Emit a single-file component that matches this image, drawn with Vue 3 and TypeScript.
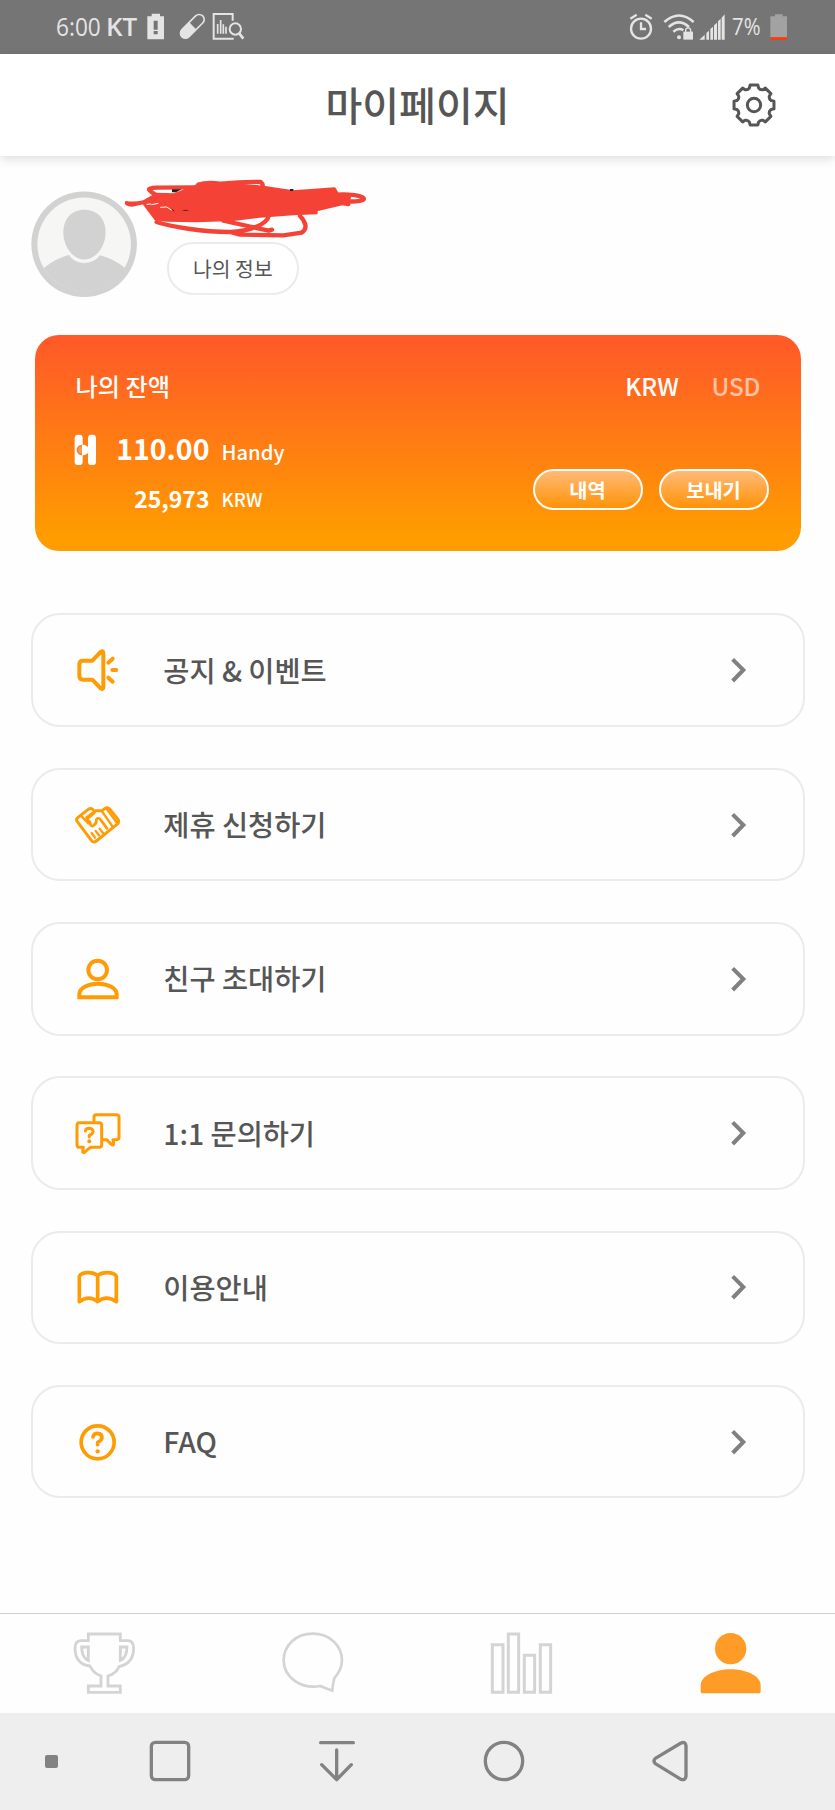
<script setup lang="ts">
interface MenuItem {
  id: string
  label: string
  box: string
}

const menu: MenuItem[] = [
  { id: 'notice', label: '공지 & 이벤트', box: '163 138 144 144' },
  { id: 'partner', label: '제휴 신청하기', box: '163 601 144 144' },
  { id: 'invite', label: '친구 초대하기', box: '163 134 144 144' },
  { id: 'inquiry', label: '1:1 문의하기', box: '163 595 144 144' },
  { id: 'guide', label: '이용안내', box: '163 129 144 144' },
  { id: 'faq', label: 'FAQ', box: '163 592 144 144' },
]

// Outline of the eight-tooth settings gear, centred on 0,0
function gearPath(): string {
  const at = (deg: number, r: number) => {
    const a = (deg * Math.PI) / 180
    return `${(r * Math.sin(a)).toFixed(2)} ${(-r * Math.cos(a)).toFixed(2)}`
  }
  let d = ''
  for (let k = 0; k < 8; k++) {
    const c = k * 45
    d += `${k ? 'L' : 'M'}${at(c - 11, 61)}L${at(c + 11, 61)}L${at(c + 15, 53)}Q${at(c + 22.5, 48)} ${at(c + 30, 53)}`
  }
  return d + 'Z'
}
const gear = gearPath()
</script>

<template>
  <div class="page">
    <div class="status">
      <span class="time">6:00</span>
      <span class="carrier">KT</span>
      <svg class="s-batt" viewBox="441 38 54 82" width="18" height="27.3">
        <path d="M442 48H455V40H480V48H492V117H442Z" fill="#e4e4e4" />
        <path d="M461 61H473V88H461ZM461 92H473V102H461Z" fill="#757575" />
      </svg>
      <svg class="s-pill" viewBox="534 36 84 84" width="28" height="28">
        <g transform="translate(577 79) rotate(-45)">
          <rect x="-44" y="-15" width="88" height="30" rx="15" fill="none" stroke="#e4e4e4" stroke-width="5" />
          <path d="M2 -16H-30A16 16 0 0 0 -30 16H2Z" fill="#e4e4e4" />
        </g>
      </svg>
      <svg class="s-chart" viewBox="637 36 99 84" width="33" height="28" fill="none" stroke="#e4e4e4" stroke-width="6">
        <path d="M699 62V42H642V116H702" />
        <path d="M654 72V101M663 60V101M671 73V101M679 80V101" stroke-width="5" />
        <circle cx="707" cy="87" r="17" />
        <path d="M719 101L731 116" stroke-width="8" />
      </svg>
      <div class="grow"></div>
      <svg class="s-alarm" viewBox="634 38 74 82" width="24.7" height="27.3" fill="none" stroke="#e4e4e4" stroke-width="7">
        <circle cx="670" cy="85" r="30" />
        <path d="M670 66V86H685M638 55L657 43M702 55L683 43" />
      </svg>
      <svg class="s-wifi" viewBox="736 38 96 82" width="32" height="27.3" fill="none" stroke="#e4e4e4" stroke-width="7.5">
        <path d="M740 65Q784 26 828 65M753 80Q784 52 814 80M767 94Q784 81 797 90" />
        <circle cx="784" cy="111" r="6" fill="#e4e4e4" stroke="none" />
        <path d="M797 94H826V118H797Z" fill="#e4e4e4" stroke="none" />
        <path d="M804 96V90A7.500 7.500 0 0 1 819 90V96" stroke-width="4" />
      </svg>
      <svg class="s-signal" viewBox="844 38 80 82" width="26.7" height="27.3" fill="#e4e4e4">
        <path d="M845 118L861 103V118ZM866 98L874 91V118H866ZM878 86L886 79V118H878ZM889 75L898 67V118H889ZM901 63L909 55V118H901ZM912 52L921 42V118H912Z" />
      </svg>
      <span class="percent">7%</span>
      <svg class="s-low" viewBox="1058 38 54 82" width="18" height="27.3">
        <path d="M1059 48H1073V42H1096V48H1109V111H1059Z" fill="#a2a2a2" />
        <path d="M1059 111H1109V119H1059Z" fill="#ff3a0c" />
      </svg>
    </div>

    <header class="header">
      <h1>마이페이지</h1>
      <svg class="gear" viewBox="-66 -66 132 132" width="44" height="44" fill="none" stroke="#565656" stroke-width="9" stroke-linejoin="round">
        <path :d="gear" />
        <circle cx="0" cy="0" r="20" />
      </svg>
    </header>

    <section class="profile">
      <svg class="avatar" viewBox="91 91 320 320" width="106.600" height="106.600">
        <circle cx="250.500" cy="251" r="158.500" fill="#d2d2d2" />
        <circle cx="250.500" cy="251" r="140.500" fill="#f6f6f5" />
        <path d="M251 147C292 147 315 176 315 215C315 258 285 297 251 297C217 297 188 258 188 215C188 176 211 147 251 147Z" fill="#d2d2d2" />
        <path d="M130 323Q165 294 205 284C225 316 276 316 298 285Q340 296 373 323A142 142 0 0 1 130 323Z" fill="#d2d2d2" stroke="#d2d2d2" stroke-width="2" />
      </svg>
      <button class="info">나의 정보</button>
      <svg class="scribble" viewBox="366 54 738 186" width="246" height="62" fill="none" stroke="#f44336" stroke-width="13" stroke-linecap="round" stroke-linejoin="round">
        <path d="M378 126Q405 130 430 124L470 101L520 103L582 80Q600 68 640 70L700 72L790 80L880 94L1004 85L1014 102L1050 112L1046 128L950 151V160L880 163L780 170L700 180L590 184L500 182L466 178L430 130L396 137Q375 137 378 126Z" fill="#f44336" stroke-width="6" />
        <path d="M465 103C440 88 440 84 470 83L585 82M595 74Q620 66 660 71C710 68 750 64 782 66Q790 72 788 82" />
        <path d="M1008 104C1045 101 1092 107 1092 117C1092 127 1030 124 1000 124L1045 132" />
        <path d="M470 186C510 200 610 216 690 216C750 214 802 192 806 168M670 182L806 212M806 212L816 209M690 216L720 224L850 226L905 218C925 205 916 184 900 168" />
        <path d="M516 88H545L528 97H516ZM870 87H880V93H870ZM514 148L524 156L520 149ZM545 152L570 152L556 149Z" fill="#222" stroke="none" />
        <path d="M482 142L500 141L514 150M455 134L474 130M441 133L452 132" stroke="#fff" stroke-width="3" />
      </svg>
    </section>

    <section class="card">
      <div class="card-top">
        <span class="card-title">나의 잔액</span>
        <span class="cur">KRW</span>
        <span class="cur off">USD</span>
      </div>
      <div class="card-bottom">
        <div class="amounts">
          <svg class="logo" viewBox="223 345 68 95" width="22.700" height="31.700">
            <rect x="225" y="347" width="24" height="91" rx="10" fill="#fff" />
            <rect x="265" y="347" width="24" height="91" rx="10" fill="#fff" />
            <circle cx="247" cy="393" r="16" fill="#f07c28" />
            <circle cx="246" cy="393" r="11" fill="#ff9a45" />
            <path d="M247 377H253Q268 383 270 393Q268 403 253 409H247Z" fill="#fff" />
          </svg>
          <b class="handy">110.00</b><span class="u1">Handy</span>
          <b class="krw">25,973</b><span class="u2">KRW</span>
        </div>
        <div class="actions">
          <button>내역</button>
          <button>보내기</button>
        </div>
      </div>
    </section>

    <nav class="menu">
      <a v-for="m in menu" :key="m.id" class="item">
        <svg class="m-icon" :viewBox="m.box" width="48" height="48" fill="none" stroke="#ff9c05" stroke-width="11" stroke-linecap="round" stroke-linejoin="round">
          <template v-if="m.id === 'notice'">
            <path d="M179 193Q179 182 190 182H218L243 156Q251 151 251 159V262Q251 270 243 265L218 239H190Q179 239 179 228Z" stroke-width="12" />
            <path d="M266 188L279 176M278 210H290M266 233L279 245" stroke-width="12" />
          </template>
          <template v-else-if="m.id === 'partner'">
            <g stroke-width="9">
              <path d="M224 632Q216 619 206 626L174 651Q168 656 173 663L215 719Q222 728 230 721L292 671Q300 664 295 656L270 625Q264 618 255 624L247 630H229L201 651" />
              <path d="M186 647L206 668M247 632L279 678M262 626L290 664" stroke-width="7" />
              <path d="M203 658Q213 662 212 671Q216 680 222 674Q232 668 230 657Q234 649 242 656L262 683" stroke-width="8" />
              <path d="M224 637L205 653M216 697L226 711M228 691L238 704M240 684L250 697" stroke-width="7" />
            </g>
          </template>
          <template v-else-if="m.id === 'invite'">
            <g stroke-linecap="butt" stroke-linejoin="miter" stroke-width="12">
              <circle cx="234" cy="179" r="28" />
              <path d="M179 261V250C181 232 206 220 235 220C264 220 289 232 291 250V261Z" />
            </g>
          </template>
          <template v-else-if="m.id === 'inquiry'">
            <g stroke-width="9">
              <path d="M179 636H239Q246 636 246 643V703Q246 710 239 710H212L194 725Q189 727 189 721L191 710H179Q172 710 172 702V643Q172 636 179 636Z" />
              <path d="M223 632V618Q223 612 230 612H291Q298 612 298 619V680Q298 687 291 687H280L282 699Q281 706 275 701L261 687H250" />
              <path d="M197 661Q198 653 209 653Q221 654 220 663Q219 670 209 674V679" />
            </g>
            <circle cx="209" cy="692" r="6" fill="#ff9c05" stroke="none" />
          </template>
          <template v-else-if="m.id === 'guide'">
            <path d="M234 245Q208 224 179 245V169Q184 158 205 158Q224 158 234 167V245Q260 224 290 245V169Q285 158 263 158Q244 158 234 167" />
          </template>
          <template v-else>
            <circle cx="234" cy="665" r="49.500" />
            <path d="M220 649Q222 638 234 638Q247 639 247 651Q246 660 234 665V672" />
            <circle cx="234" cy="692" r="6.500" fill="#ff9c05" stroke="none" />
          </template>
        </svg>
        <span class="label">{{ m.label }}</span>
        <svg class="chev" viewBox="150 172 51 78" width="17" height="26" fill="none" stroke="#808080" stroke-width="12">
          <path d="M158 179L190 211L158 244" />
        </svg>
      </a>
    </nav>

    <div class="tabs">
      <svg viewBox="220 97 190 188" width="63.300" height="62.700" fill="none" stroke="#d4d4d4" stroke-width="8.500">
        <path d="M266 103H362V123H386Q402 125 402 145C402 178 386 195 358 201Q350 221 325 229V259H362V278H266V259H304V229Q281 221 271 199C240 195 226 176 226 145Q226 125 243 123H266Z" />
        <path d="M266 142V182Q246 174 246 142ZM362 142V182Q382 174 382 142Z" />
      </svg>
      <svg viewBox="845 97 190 188" width="63.300" height="62.700" fill="none" stroke="#d4d4d4" stroke-width="8">
        <path d="M940 102C991 102 1028 138 1028 182C1028 203 1018 221 1005 236Q1001 250 999 273L962 259C908 269 853 235 853 182C853 138 889 102 940 102Z" />
      </svg>
      <svg viewBox="221 97 190 188" width="63.300" height="62.700" fill="none" stroke="#d4d4d4" stroke-width="9">
        <path d="M228 135H260V278H228ZM276 103H307V278H276ZM324 167H355V278H324ZM372 135H403V278H372Z" />
      </svg>
      <svg viewBox="847 97 190 188" width="63.300" height="62.700" fill="#ff9c28">
        <circle cx="942" cy="147" r="47" />
        <path d="M852 277V255C854 230 892 209 942 209C992 209 1030 230 1032 255V277Q1032 281 1028 281H856Q852 281 852 277Z" />
      </svg>
    </div>

    <div class="sysnav">
      <i class="dot"></i>
      <svg viewBox="448 419 126 126" width="42" height="42"><rect x="455" y="426" width="112" height="112" rx="12" /></svg>
      <svg viewBox="947 419 126 126" width="42" height="42"><path d="M961 427H1059M1009 449V537M964 493L1009 538L1053 493" /></svg>
      <svg viewBox="196 419 126 126" width="42" height="42"><circle cx="259" cy="482" r="56" /></svg>
      <svg viewBox="697 419 126 126" width="42" height="42"><path d="M808 436V528Q806 541 793 537L716 490Q708 482 716 474L793 428Q806 423 808 436Z" /></svg>
    </div>
  </div>
</template>

<style>
body {
  margin: 0;
  background: #fefefe;
}
</style>

<style scoped>
.page {
  width: 835px;
  height: 1810px;
  display: flex;
  flex-direction: column;
  overflow: hidden;
  background: #fefefe;
  color: #565656;
  font-family: "Noto Sans CJK KR", "Noto Sans", sans-serif;
}
svg {
  display: block;
  flex: none;
}
button {
  font-family: inherit;
  padding: 0;
  box-sizing: border-box;
}
.status {
  flex: none;
  height: 54.300px;
  box-sizing: border-box;
  padding: 0 47px 1.500px 56px;
  background: #757575;
  color: #e4e4e4;
  display: flex;
  align-items: center;
  font-family: "Open Sans", sans-serif;
  font-size: 26px;
  line-height: 30px;
}
.time {
  width: 50px;
  transform: scaleX(0.87);
  transform-origin: left;
}
.carrier {
  width: 41px;
  font-weight: 600;
}
.s-pill { margin-left: 13px; }
.s-chart { margin-left: 6px; }
.grow { flex: 1; }
.s-wifi { margin-left: 9.300px; }
.s-signal { margin-left: 4px; }
.percent {
  width: 41.500px;
  margin-left: 6px;
  font-size: 24px;
  white-space: nowrap;
  transform: scaleX(0.85);
  transform-origin: left;
}
.s-low { margin-left: -3px; }
.header {
  flex: none;
  height: 101.700px;
  display: grid;
  grid-template-columns: 1fr auto 1fr;
  align-items: center;
  background: #fff;
  box-shadow: 0 3px 10px rgba(0, 0, 0, 0.13);
}
.header h1 {
  grid-column: 2;
  margin: 0;
  padding-bottom: 2px;
  font-size: 40px;
  line-height: 58px;
  font-weight: 500;
}
.gear {
  justify-self: end;
  margin-right: 59px;
}
.profile {
  position: relative;
  flex: none;
  height: 179.500px;
  box-sizing: border-box;
  padding: 34.600px 0 0 30.500px;
  display: flex;
}
.info {
  width: 131.500px;
  height: 53px;
  margin: 51.500px 0 0 30px;
  border: 2px solid #ebebeb;
  border-radius: 27px;
  background: #fff;
  color: #565656;
  font-size: 20.400px;
  line-height: 30px;
  padding-bottom: 2px;
}
.scribble {
  position: absolute;
  left: 122px;
  top: 22px;
}
.card {
  flex: none;
  width: 766px;
  height: 215.500px;
  margin-left: 35px;
  box-sizing: border-box;
  border-radius: 24px;
  padding: 34px 32.500px 0 40.500px;
  background: linear-gradient(#ff5a28 3%, #ff9c00 93%);
  color: #fff;
}
.card-top {
  display: flex;
  align-items: center;
  height: 34px;
  font-size: 24.200px;
  line-height: 34px;
  font-weight: 500;
}
.card-title { flex: 1; }
.cur { margin-right: 32.500px; }
.cur.off {
  margin-right: 8px;
  color: rgba(255, 255, 255, 0.6);
}
.card-bottom {
  display: flex;
  justify-content: space-between;
}
.amounts {
  display: grid;
  grid-template-columns: 23px 111px auto;
  grid-template-rows: 50px 50px;
  margin-top: 20px;
}
.logo {
  align-self: start;
  margin: 10.500px 0 0 -1.500px;
}
.amounts b {
  text-align: right;
  font-weight: 700;
}
.handy { font-size: 28.500px; line-height: 49px; }
.u1 { font-size: 20.200px; line-height: 58px; margin-left: 12px; font-weight: 500; }
.krw { grid-column: 2; font-size: 23px; line-height: 50px; }
.u2 { font-size: 18.500px; line-height: 53px; margin-left: 12px; font-weight: 500; }
.actions {
  display: flex;
  gap: 16px;
  margin-top: 66px;
}
.actions button {
  width: 110px;
  height: 41px;
  border: 2px solid #fff;
  border-radius: 21px;
  background: linear-gradient(#ffbc7e, #ff9100) border-box;
  color: #fff;
  font-size: 19.800px;
  font-weight: 700;
  line-height: 30px;
}
.menu {
  flex: none;
  display: grid;
  grid-auto-rows: 113.500px;
  row-gap: 40.800px;
  margin: 62.500px 30.500px 0 31px;
}
.item {
  display: flex;
  align-items: center;
  box-sizing: border-box;
  border: 2px solid #ebebeb;
  border-radius: 29px;
  padding: 0 55.500px 0 41.300px;
}
.label {
  flex: 1;
  margin-left: 41px;
  font-size: 28.400px;
  font-weight: 500;
  line-height: 42px;
  padding-bottom: 1px;
}
.tabs {
  flex: none;
  height: 99.700px;
  margin-top: auto;
  box-sizing: border-box;
  border-top: 1.300px solid #cfcfcf;
  display: grid;
  grid-template-columns: repeat(4, 1fr);
  justify-items: center;
  padding-top: 18px;
}
.sysnav {
  flex: none;
  height: 97.300px;
  box-sizing: border-box;
  background: #eee;
  display: grid;
  grid-template-columns: 87px repeat(4, 166.700px);
  justify-items: center;
  padding-top: 27px;
}
.sysnav svg {
  fill: none;
  stroke: #828282;
  stroke-width: 10;
  stroke-linecap: round;
  stroke-linejoin: round;
}
.dot {
  justify-self: start;
  margin: 15px 0 0 45px;
  width: 13px;
  height: 13px;
  border-radius: 2px;
  background: #828282;
}
</style>
